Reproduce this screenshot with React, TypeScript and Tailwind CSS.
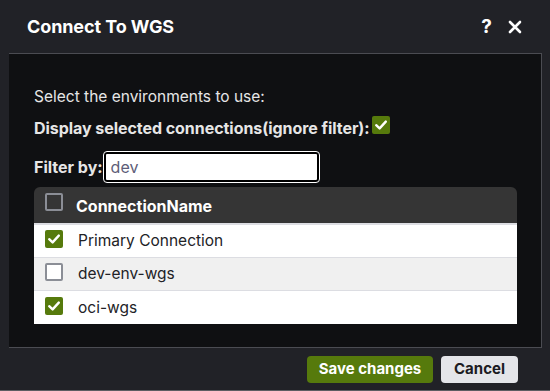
import React from "react";

const Check = ({ checked, dark }: { checked: boolean; dark?: boolean }) =>
  checked ? (
    <div className="w-[18px] h-[18px] rounded-[2px] bg-[#567a0c] flex items-center justify-center shrink-0">
      <svg width="14" height="14" viewBox="0 0 14 14">
        <path d="M2.2 7.2 L5.6 10.4 L11.8 3.6" fill="none" stroke="#ffffff" strokeWidth="2.4" strokeLinecap="round" strokeLinejoin="round" />
      </svg>
    </div>
  ) : (
    <div
      className={
        "w-[18px] h-[18px] rounded-[2px] border-2 shrink-0 " +
        (dark ? "border-[#8b8e96] bg-[#353535]" : "border-[#8b8e96] bg-white")
      }
    />
  );

export default function App() {
  const rows = [
    { name: "Primary Connection", checked: true, bg: "bg-white" },
    { name: "dev-env-wgs", checked: false, bg: "bg-[#f0f0f0]" },
    { name: "oci-wgs", checked: true, bg: "bg-white" },
  ];
  return (
    <div
      className="w-[550px] h-[391px] bg-[#212227] flex flex-col border-b border-[#5c5d62] overflow-hidden"
      style={{ fontFamily: "Inter, 'Open Sans', Arial, sans-serif" }}
    >
      <div className="h-[53px] flex items-center pl-[27px] pr-[28px] shrink-0">
        <div className="text-white font-bold text-[18px] leading-[24px] flex-1 mt-[1px] tracking-[-0.1px]">Connect To WGS</div>
        <div className="text-white font-bold text-[19px] leading-none mr-[16px]">?</div>
        <svg width="14" height="14" viewBox="0 0 14 14">
          <path d="M2 2 L12 12 M12 2 L2 12" stroke="#ffffff" strokeWidth="2.6" strokeLinecap="round" />
        </svg>
      </div>
      <div className="mx-[9px] mr-[8px] h-[295px] shrink-0 bg-[#0f1012] border-t border-r border-b border-[#4b4c52] pt-[32px] px-[25px] flex flex-col">
        <div className="text-[#e6e6e6] text-[15.5px] leading-[22px]">Select the environments to use:</div>
        <div className="flex items-center mt-[9px] h-[22px]">
          <span className="text-[#e6e6e6] text-[16px] leading-[22px] font-bold tracking-[-0.05px]">Display selected connections(ignore filter):</span>
          <div className="ml-[2px] mb-[6px]">
            <Check checked />
          </div>
        </div>
        <div className="flex items-center mt-[13px]">
          <span className="text-[#e6e6e6] text-[16px] font-bold mr-[1px]">Filter by:</span>
          <div className="w-[215px] h-[30px] bg-white border-2 border-black rounded-[3px] outline outline-1 outline-white flex items-center pl-[5px] text-[#5d5d78] text-[16px]">
            dev
          </div>
        </div>
        <div className="mt-[5px] w-[483px] rounded-t-[6px] overflow-hidden">
          <div className="h-[36px] bg-[#353535] flex items-center pl-[11px] border-b-2 border-[#dcdde2] box-content">
            <div className="mb-[6px]">
              <Check checked={false} dark />
            </div>
            <span className="ml-[13px] text-white font-bold text-[16px] mt-[2px]">ConnectionName</span>
          </div>
          {rows.map((r, i) => (
            <div
              key={r.name}
              className={
                "h-[33px] flex items-center pl-[11px] " +
                r.bg +
                (i < 2 ? " border-b border-[#dcdde2]" : "")
              }
            >
              <div className="mb-[4px]">
                <Check checked={r.checked} />
              </div>
              <span className="ml-[15px] text-[#222226] text-[15.5px]">{r.name}</span>
            </div>
          ))}
        </div>
      </div>
      <div className="flex-1 flex items-center justify-end pr-[32px] gap-[8px]">
        <button className="w-[126px] h-[27px] rounded-[4px] bg-[#567a0c] text-white font-bold text-[15px]">Save changes</button>
        <button className="w-[77px] h-[27px] rounded-[4px] bg-[#e4e5e9] text-[#1b1b22] font-bold text-[15px]">Cancel</button>
      </div>
    </div>
  );
}
